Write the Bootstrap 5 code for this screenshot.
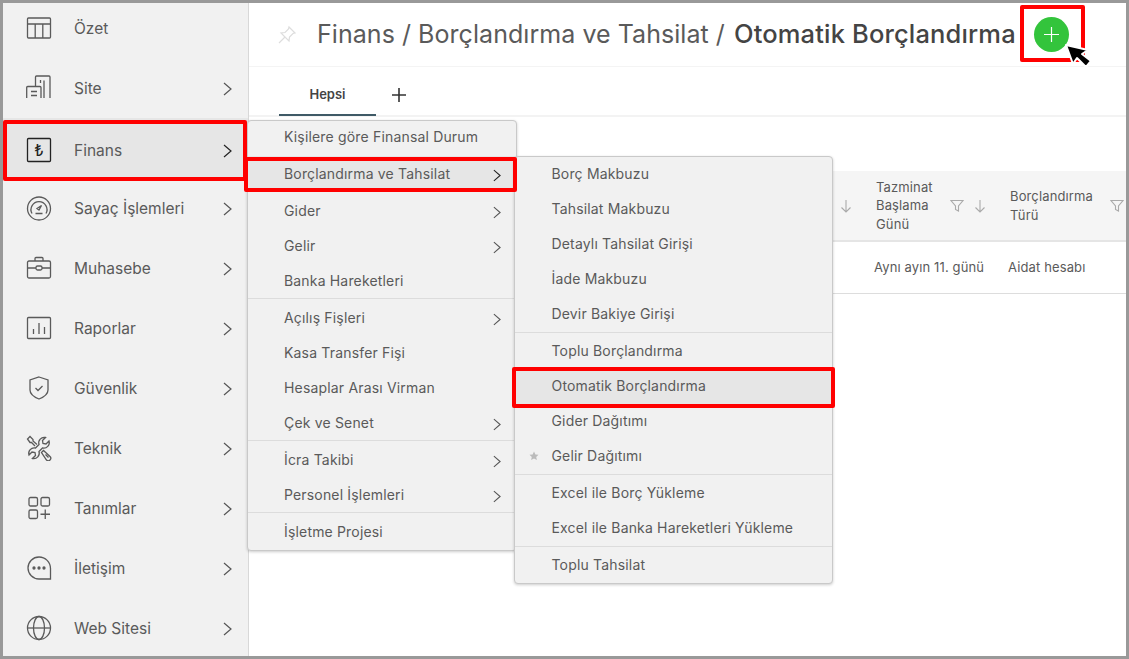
<!DOCTYPE html>
<html lang="tr">
  <head>
    <meta charset="UTF-8" />
    <title>Otomatik Borçlandırma</title>
    <link href="https://cdn.jsdelivr.net/npm/bootstrap@5.3.3/dist/css/bootstrap.min.css" rel="stylesheet" />
    <style>
      html, body { margin: 0; height: 100%; overflow: hidden; background: #fff; }
      body { font-family: Inter, "Noto Sans", sans-serif; color: #5a5a5a; }
      .app-frame { width: 1129px; height: 659px; border: 3px solid #999; overflow: hidden; }

      .side-bar { width: 246px; flex: none; background: #f1f1f1; border-right: 1px solid #d8d8d8; }
      .side-item { height: 60px; padding: 0 16px 0 23px; font-size: 15.500px; color: #5a5a5a; }
      .side-item:first-child { height: 50px; margin-bottom: 5px; }
      .side-item.is-open { background: #e6e6e6; padding-top: 4px; }
      .side-label { padding-top: 2px; }
      .side-ico { width: 26px; height: 26px; margin-right: 22px; flex: none; fill: none; stroke: #5a5a5a; stroke-width: 1.3; }
      .is-open .side-ico { stroke: #222; }
      .chev { width: 9px; height: 14px; fill: none; stroke: #555; stroke-width: 1.2; flex: none; margin-top: 2px; }
      .is-open > .chev { stroke: #222; }

      .page-head { height: 64px; padding-left: 28px; border-bottom: 1px solid #f4f4f4; flex: none; }
      .pin-ico { width: 20px; height: 20px; margin-right: 20px; fill: none; stroke: #ddd; stroke-width: 1.2; }
      .page-title { font-size: 25px; font-weight: 400; color: #5a5a5a; margin: 0; white-space: nowrap; letter-spacing: .05px; }
      .page-title b { font-weight: 500; color: #444; font-size: 25.500px; letter-spacing: .15px; margin-left: 2px; }
      .add-btn { width: 35px; height: 35px; background: #33c43c; border-radius: 50%; margin-left: 18px; flex: none; }
      .add-btn svg { width: 15px; height: 15px; stroke: #fff; stroke-width: 1.2; }

      .tab-bar { height: 50px; padding-left: 30px; border-bottom: 2px solid #f3f3f3; flex: none; }
      .tab-one { width: 97px; height: 49px; padding-top: 9px; font-size: 13px; font-weight: 600; color: #444; border-bottom: 2px solid #3f5a66; }
      .tab-add { width: 16px; height: 16px; margin: 8px 0 0 15px; stroke: #333; stroke-width: 1.6; }

      .grid-wrap { margin-top: 54px; }
      .data-grid { width: 878px; table-layout: fixed; border-collapse: collapse; font-size: 13px; letter-spacing: .13px; color: #5a5a5a; }
      .data-grid th { height: 70px; background: #f5f5f5; border-bottom: 2px solid #e5e5e5; font-weight: 400; line-height: 18.500px; padding: 0; }
      .data-grid td { height: 52px; border-bottom: 1px solid #ddd; padding: 0; }
      .th-ico { width: 14px; height: 14px; fill: none; stroke: #aaa; stroke-width: 1.1; flex: none; }
      .th-text { padding-left: 10px; }
      .th-sort-only { padding-right: 13px; }
      .th-filter { margin-right: 1px; }
      .th-sort { margin-right: 13px; }
      .th-filter-end { margin-right: 3px; }

      .fly-menu { background: #f1f1f1; border: 1px solid #c9c9c9; border-radius: 4px; box-shadow: 0 1px 3px rgba(0, 0, 0, .2); font-size: 14px; letter-spacing: .17px; color: #5a5a5a; }
      .fly-one { left: 244px; top: 117px; width: 270px; height: 431px; }
      .fly-two { left: 511px; top: 153px; width: 319px; }
      .fly-item { height: 35px; white-space: nowrap; }
      .fly-one .fly-item { padding: 0 15px 0 36px; }
      .fly-two .fly-item { padding: 0 13px 2px 36.500px; }
      .fly-one .fly-item:first-child { padding-bottom: 5px; }
      .fly-item.is-open { background: #e6e6e6; }
      .fly-item .chev { width: 8px; height: 13px; margin-top: 4px; }
      .fly-line { height: 2px; border-top: 1px solid #dcdcdc; }
      .fly-star { width: 10px; height: 10px; margin: 0 13px 0 -23px; fill: #bbb; }

      .red-box { border: 4px solid #f00; border-radius: 2px; pointer-events: none; }
      .red-finans { left: 0; top: 117px; width: 244px; height: 61px; }
      .red-borc { left: 241px; top: 154px; width: 273px; height: 35px; }
      .red-oto { left: 509px; top: 364px; width: 323px; height: 41px; }
      .red-add { left: 1017px; top: 2px; width: 65px; height: 57px; }
      .mouse-ptr { left: 1059px; top: 38px; width: 34px; height: 28px; }
    </style>
  </head>
  <body>
    <div class="app-frame position-relative d-flex">
      <aside class="side-bar">
        <div class="side-item d-flex align-items-center">
          <svg class="side-ico" viewBox="0 0 26 26"><rect x="1.500" y="3" width="23" height="20" rx="1"/><path d="M1.500 9h23M9.200 9v14M16.800 9v14"/></svg>
          <span class="side-label flex-grow-1">Özet</span>
        </div>
        <div class="side-item d-flex align-items-center">
          <svg class="side-ico" viewBox="0 0 26 26"><path d="M.7 23V12.500a1 1 0 0 1 1-1H14a1 1 0 0 1 1 1V23M5 16.500h6M5 20.500h6M9.500 11V2a1 1 0 0 1 1-1H23a1 1 0 0 1 1 1v21M18 5.500V23M14.500 5v3"/></svg>
          <span class="side-label flex-grow-1">Site</span>
          <svg class="chev" viewBox="0 0 9 14"><path d="M1 1l7 6-7 6"/></svg>
        </div>
        <div class="side-item is-open d-flex align-items-center">
          <svg class="side-ico" viewBox="0 0 26 26"><rect x="1.500" y="1.500" width="23" height="23" rx="1"/><text x="13" y="19" font-size="16" text-anchor="middle" fill="#222" stroke="none" font-family="Inter">₺</text></svg>
          <span class="side-label flex-grow-1">Finans</span>
          <svg class="chev" viewBox="0 0 9 14"><path d="M1 1l7 6-7 6"/></svg>
        </div>
        <div class="side-item d-flex align-items-center">
          <svg class="side-ico" viewBox="0 0 26 26"><circle cx="13" cy="13.500" r="11.500"/><path d="M6 18.500a8 8 0 1 1 14 0M11 13.500l4.500-3-2.500 4.500zM9.500 18.500h7"/></svg>
          <span class="side-label flex-grow-1">Sayaç İşlemleri</span>
          <svg class="chev" viewBox="0 0 9 14"><path d="M1 1l7 6-7 6"/></svg>
        </div>
        <div class="side-item d-flex align-items-center">
          <svg class="side-ico" viewBox="0 0 26 26"><rect x="1.500" y="6" width="23" height="17" rx="1.500"/><path d="M9 6V3.500a1 1 0 0 1 1-1h6a1 1 0 0 1 1 1V6M1.500 13h8.500M16 13h8.500"/><rect x="10" y="11" width="6" height="4" rx="1.500"/></svg>
          <span class="side-label flex-grow-1">Muhasebe</span>
          <svg class="chev" viewBox="0 0 9 14"><path d="M1 1l7 6-7 6"/></svg>
        </div>
        <div class="side-item d-flex align-items-center">
          <svg class="side-ico" viewBox="0 0 26 26"><rect x="1.500" y="2.500" width="23" height="21" rx="1"/><path d="M7.500 19v-5M13 19V8M18.500 19v-7"/></svg>
          <span class="side-label flex-grow-1">Raporlar</span>
          <svg class="chev" viewBox="0 0 9 14"><path d="M1 1l7 6-7 6"/></svg>
        </div>
        <div class="side-item d-flex align-items-center">
          <svg class="side-ico" viewBox="0 0 26 26"><path d="M13 2l9 3v10c0 4-4 7-9 9-5-2-9-5-9-9V5z"/><path d="M9.500 13l2.500 2.500 4.500-4.500"/></svg>
          <span class="side-label flex-grow-1">Güvenlik</span>
          <svg class="chev" viewBox="0 0 9 14"><path d="M1 1l7 6-7 6"/></svg>
        </div>
        <div class="side-item d-flex align-items-center">
          <svg class="side-ico" viewBox="0 0 26 26"><path d="M19.500 2.500l-3 3 .5 3 3 .5 3-3a5.500 5.500 0 0 1-6.500 7L13 16.500a5.500 5.500 0 0 1-6.500 7l3-3-.5-3-3-.5-3 3a5.500 5.500 0 0 1 6.500-7L13 9.500a5.500 5.500 0 0 1 6.500-7z"/><path d="M9 11L5.500 7.500H4L1.500 4 4 1.500 7 4.500V6l4 3.500M15.500 17.500l2-2 6.500 6a2.400 2.400 0 0 1-3.500 3.500zM19.500 19.500l3 3"/></svg>
          <span class="side-label flex-grow-1">Teknik</span>
          <svg class="chev" viewBox="0 0 9 14"><path d="M1 1l7 6-7 6"/></svg>
        </div>
        <div class="side-item d-flex align-items-center">
          <svg class="side-ico" viewBox="0 0 26 26"><rect x="3" y="2.500" width="8.500" height="8.500" rx="1.500"/><rect x="15" y="2.500" width="8.500" height="8.500" rx="1.500"/><rect x="3" y="15" width="8.500" height="8.500" rx="1.500"/><path d="M19.250 14.500v9.500M14.500 19.250h9.500"/></svg>
          <span class="side-label flex-grow-1">Tanımlar</span>
          <svg class="chev" viewBox="0 0 9 14"><path d="M1 1l7 6-7 6"/></svg>
        </div>
        <div class="side-item d-flex align-items-center">
          <svg class="side-ico" viewBox="0 0 26 26"><path d="M13 2a11.500 11.500 0 0 1 11.500 11.500V24H13a11 11 0 0 1 0-22z"/><circle cx="8" cy="13" r="1" fill="#555"/><circle cx="13" cy="13" r="1" fill="#555"/><circle cx="18" cy="13" r="1" fill="#555"/></svg>
          <span class="side-label flex-grow-1">İletişim</span>
          <svg class="chev" viewBox="0 0 9 14"><path d="M1 1l7 6-7 6"/></svg>
        </div>
        <div class="side-item d-flex align-items-center">
          <svg class="side-ico" viewBox="0 0 26 26"><circle cx="13" cy="13" r="11.500"/><ellipse cx="13" cy="13" rx="5.500" ry="11.500"/><path d="M1.500 13h23"/></svg>
          <span class="side-label flex-grow-1">Web Sitesi</span>
          <svg class="chev" viewBox="0 0 9 14"><path d="M1 1l7 6-7 6"/></svg>
        </div>
      </aside>

      <main class="flex-grow-1 d-flex flex-column overflow-hidden">
        <div class="page-head d-flex align-items-center">
          <svg class="pin-ico" viewBox="0 0 20 20"><path d="M12 2l6 6-2 .5-3.500 3.500-.5 4L8 12l-6 6 6-6-4-4 4-.5L11.500 4z"/></svg>
          <h1 class="page-title">Finans / Borçlandırma ve Tahsilat / <b>Otomatik Borçlandırma</b></h1>
          <div class="add-btn d-flex align-items-center justify-content-center">
            <svg viewBox="0 0 15 15"><path d="M7.500 0v15M0 7.500h15"/></svg>
          </div>
        </div>
        <div class="tab-bar d-flex align-items-center">
          <div class="tab-one d-flex align-items-center justify-content-center">Hepsi</div>
          <svg class="tab-add" viewBox="0 0 16 16"><path d="M8 1v14M1 8h14"/></svg>
        </div>
        <div class="grid-wrap">
          <table class="data-grid">
            <colgroup><col style="width: 617px" /><col style="width: 134px" /><col /></colgroup>
            <thead>
              <tr>
                <th>
                  <div class="d-flex justify-content-end th-sort-only">
                    <svg class="th-ico" viewBox="0 0 14 14"><path d="M7 1v12M2.500 8.500L7 13l4.500-4.500"/></svg>
                  </div>
                </th>
                <th>
                  <div class="d-flex align-items-center th-text gap-2">
                    <span class="flex-grow-1">Tazminat<br />Başlama<br />Günü</span>
                    <svg class="th-ico th-filter" viewBox="0 0 14 14"><path d="M1 1.500h12L8.500 7v5L5.500 10.500V7z"/></svg>
                    <svg class="th-ico th-sort" viewBox="0 0 14 14"><path d="M7 1v12M2.500 8.500L7 13l4.500-4.500"/></svg>
                  </div>
                </th>
                <th>
                  <div class="d-flex align-items-center th-text">
                    <span class="flex-grow-1">Borçlandırma<br />Türü</span>
                    <svg class="th-ico th-filter-end" viewBox="0 0 14 14"><path d="M1 1.500h12L8.500 7v5L5.500 10.500V7z"/></svg>
                  </div>
                </th>
              </tr>
            </thead>
            <tbody>
              <tr>
                <td></td>
                <td class="ps-2">Aynı ayın 11. günü</td>
                <td class="ps-2">Aidat hesabı</td>
              </tr>
            </tbody>
          </table>
        </div>
      </main>

      <div class="fly-menu fly-one position-absolute">
        <div class="fly-item d-flex align-items-center">Kişilere göre Finansal Durum</div>
        <div class="fly-item is-open d-flex align-items-center justify-content-between">Borçlandırma ve Tahsilat <svg class="chev" viewBox="0 0 9 14"><path d="M1 1l7 6-7 6"/></svg></div>
        <div class="fly-line"></div>
        <div class="fly-item d-flex align-items-center justify-content-between">Gider <svg class="chev" viewBox="0 0 9 14"><path d="M1 1l7 6-7 6"/></svg></div>
        <div class="fly-item d-flex align-items-center justify-content-between">Gelir <svg class="chev" viewBox="0 0 9 14"><path d="M1 1l7 6-7 6"/></svg></div>
        <div class="fly-item d-flex align-items-center">Banka Hareketleri</div>
        <div class="fly-line"></div>
        <div class="fly-item d-flex align-items-center justify-content-between">Açılış Fişleri <svg class="chev" viewBox="0 0 9 14"><path d="M1 1l7 6-7 6"/></svg></div>
        <div class="fly-item d-flex align-items-center">Kasa Transfer Fişi</div>
        <div class="fly-item d-flex align-items-center">Hesaplar Arası Virman</div>
        <div class="fly-item d-flex align-items-center justify-content-between">Çek ve Senet <svg class="chev" viewBox="0 0 9 14"><path d="M1 1l7 6-7 6"/></svg></div>
        <div class="fly-line"></div>
        <div class="fly-item d-flex align-items-center justify-content-between">İcra Takibi <svg class="chev" viewBox="0 0 9 14"><path d="M1 1l7 6-7 6"/></svg></div>
        <div class="fly-item d-flex align-items-center justify-content-between">Personel İşlemleri <svg class="chev" viewBox="0 0 9 14"><path d="M1 1l7 6-7 6"/></svg></div>
        <div class="fly-line"></div>
        <div class="fly-item d-flex align-items-center">İşletme Projesi</div>
      </div>

      <div class="fly-menu fly-two position-absolute">
        <div class="fly-item d-flex align-items-center">Borç Makbuzu</div>
        <div class="fly-item d-flex align-items-center">Tahsilat Makbuzu</div>
        <div class="fly-item d-flex align-items-center">Detaylı Tahsilat Girişi</div>
        <div class="fly-item d-flex align-items-center">İade Makbuzu</div>
        <div class="fly-item d-flex align-items-center">Devir Bakiye Girişi</div>
        <div class="fly-line"></div>
        <div class="fly-item d-flex align-items-center">Toplu Borçlandırma</div>
        <div class="fly-item is-open d-flex align-items-center">Otomatik Borçlandırma</div>
        <div class="fly-item d-flex align-items-center">Gider Dağıtımı</div>
        <div class="fly-item d-flex align-items-center"><svg class="fly-star" viewBox="0 0 10 10"><path d="M5 .5l1.400 3 3.100.3-2.300 2.100.7 3.100L5 7.400 2.100 9l.7-3.100L.5 3.800l3.100-.3z"/></svg>Gelir Dağıtımı</div>
        <div class="fly-line"></div>
        <div class="fly-item d-flex align-items-center">Excel ile Borç Yükleme</div>
        <div class="fly-item d-flex align-items-center">Excel ile Banka Hareketleri Yükleme</div>
        <div class="fly-line"></div>
        <div class="fly-item d-flex align-items-center">Toplu Tahsilat</div>
      </div>

      <div class="red-box red-finans position-absolute"></div>
      <div class="red-box red-borc position-absolute"></div>
      <div class="red-box red-oto position-absolute"></div>
      <div class="red-box red-add position-absolute"></div>
      <svg class="mouse-ptr position-absolute" viewBox="0 0 34 28"><path d="M4 4l7 19 4-6 9 9 5-6-9-7 6-4z" fill="#000" stroke="#fff" stroke-width="2" stroke-linejoin="round"/></svg>
    </div>
    <script src="https://cdn.jsdelivr.net/npm/bootstrap@5.3.3/dist/js/bootstrap.bundle.min.js"></script>
  </body>
</html>
